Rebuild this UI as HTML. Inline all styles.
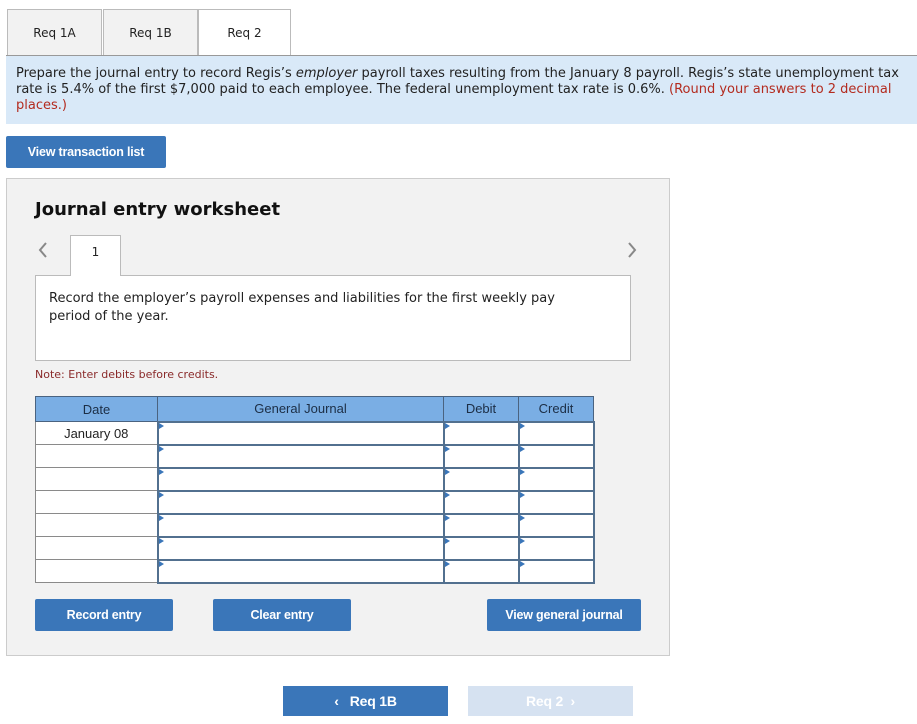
<!DOCTYPE html>
<html><head><style>
*{margin:0;padding:0;box-sizing:border-box}
body{width:917px;height:724px;background:#fff;position:relative;font-family:"DejaVu Sans","Liberation Sans",sans-serif;color:#222;overflow:hidden}
.a{position:absolute}
.tab{position:absolute;top:9px;height:47px;border:1px solid #bbb;background:#f2f2f2;font-size:12px;text-align:center;line-height:46px;color:#222}
.btn{position:absolute;background:#3a76b9;color:#fff;font-family:"Liberation Sans",sans-serif;font-weight:bold;font-size:12.5px;text-align:center;border-radius:2px;letter-spacing:-0.2px}
table{border-collapse:collapse;position:absolute;left:35px;top:396px;font-family:"Liberation Sans",sans-serif;font-size:13px}
td{height:23px;border:1px solid #8a8a8a;background:#fff;position:relative;padding:0}
th{height:25px;background:#7aaee4;border:1px solid #4a6380;font-weight:normal;color:#1c2e45}
td.i{border:2px solid #52708f}
td.i:before{content:"";position:absolute;left:0;top:0;border-left:5px solid #3a76b9;border-top:3px solid transparent;border-bottom:3px solid transparent}
</style></head><body>
<div class="tab" style="left:7px;width:95px">Req 1A</div>
<div class="tab" style="left:103px;width:95px">Req 1B</div>
<div class="tab" style="left:198px;width:93px;background:#fff;border-bottom:none;height:48px">Req 2</div>
<div class="a" style="left:6px;top:55px;width:911px;height:1px;background:#999"></div>
<div class="a" style="left:6px;top:56px;width:911px;height:68px;background:#d9e9f8;font-size:13px;line-height:16px;padding:10px 10px 0 10px">Prepare the journal entry to record Regis’s <i>employer</i> payroll taxes resulting from the January 8 payroll. Regis’s state unemployment tax rate is 5.4% of the first $7,000 paid to each employee. The federal unemployment tax rate is 0.6%. <span style="color:#b32b1f">(Round your answers to 2 decimal places.)</span></div>
<div class="btn" style="left:6px;top:136px;width:160px;height:32px;line-height:32px">View transaction list</div>
<div class="a" style="left:6px;top:178px;width:664px;height:478px;background:#f2f2f2;border:1px solid #ccc"></div>
<div class="a" style="left:35px;top:199px;font-size:18px;font-weight:bold;color:#111">Journal entry worksheet</div>
<svg class="a" style="left:37px;top:241px" width="12" height="18"><path d="M9 2 L3 9 L9 16" stroke="#888" stroke-width="2" fill="none"/></svg>
<svg class="a" style="left:626px;top:241px" width="12" height="18"><path d="M3 2 L9 9 L3 16" stroke="#888" stroke-width="2" fill="none"/></svg>
<div class="a" style="left:35px;top:275px;width:596px;height:86px;background:#fff;border:1px solid #bbb;font-size:13px;line-height:18px;padding:14px 60px 14px 13px">Record the employer’s payroll expenses and liabilities for the first weekly pay period of the year.</div>
<div class="a" style="left:70px;top:235px;width:51px;height:41px;background:#fff;border:1px solid #bbb;border-bottom:none;text-align:center;font-size:12px;line-height:32px">1</div>
<div class="a" style="left:35px;top:368px;font-size:11px;color:#8a2a2a">Note: Enter debits before credits.</div>
<table>
<tr><th style="width:122px">Date</th><th style="width:286px">General Journal</th><th style="width:75px">Debit</th><th style="width:75px">Credit</th></tr>
<tr><td style="text-align:center;color:#222">January 08</td><td class="i"></td><td class="i"></td><td class="i"></td></tr>
<tr><td></td><td class="i"></td><td class="i"></td><td class="i"></td></tr>
<tr><td></td><td class="i"></td><td class="i"></td><td class="i"></td></tr>
<tr><td></td><td class="i"></td><td class="i"></td><td class="i"></td></tr>
<tr><td></td><td class="i"></td><td class="i"></td><td class="i"></td></tr>
<tr><td></td><td class="i"></td><td class="i"></td><td class="i"></td></tr>
<tr><td></td><td class="i"></td><td class="i"></td><td class="i"></td></tr>
</table>
<div class="btn" style="left:35px;top:599px;width:138px;height:32px;line-height:32px">Record entry</div>
<div class="btn" style="left:213px;top:599px;width:138px;height:32px;line-height:32px">Clear entry</div>
<div class="btn" style="left:487px;top:599px;width:154px;height:32px;line-height:32px">View general journal</div>
<div class="btn" style="left:283px;top:686px;width:165px;height:30px;line-height:30px;font-size:14px;border-radius:0">&#8249;&nbsp;&nbsp; Req 1B</div>
<div class="btn" style="left:468px;top:686px;width:165px;height:30px;line-height:30px;font-size:14px;background:#d6e2f1;color:#fff;border-radius:0">Req 2 &nbsp;&#8250;</div>
</body></html>
